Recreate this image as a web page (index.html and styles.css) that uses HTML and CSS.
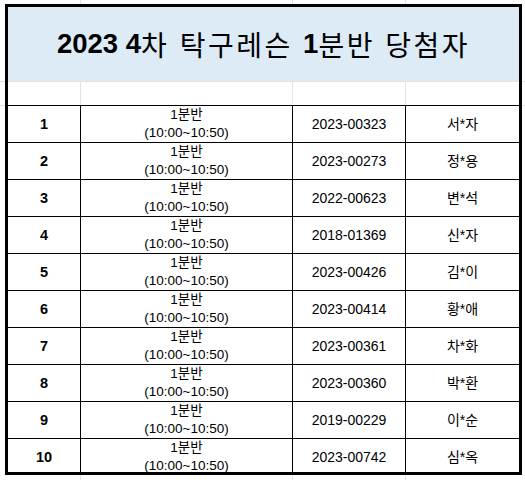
FILE: index.html
```html
<!DOCTYPE html>
<html lang="ko">
<head>
<meta charset="utf-8">
<title>2023 4차 탁구레슨 1분반 당첨자</title>
<link rel="stylesheet" href="styles.css">
</head>
<body>
<div class="sheet">
  <div class="table">
    <div class="title"><span class="lat">2023 4</span><span class="ko">차 탁구레슨 </span><span class="lat">1</span><span class="ko">분반 당첨자</span></div>
    <div class="blank">
      <div class="bc"></div><div class="bc"></div><div class="bc"></div><div class="bc"></div>
    </div>
    <div class="row"><div class="c num">1</div><div class="c cls">1분반<br>(10:00~10:50)</div><div class="c id">2023-00323</div><div class="c name">서*자</div></div>
    <div class="row"><div class="c num">2</div><div class="c cls">1분반<br>(10:00~10:50)</div><div class="c id">2023-00273</div><div class="c name">정*용</div></div>
    <div class="row"><div class="c num">3</div><div class="c cls">1분반<br>(10:00~10:50)</div><div class="c id">2022-00623</div><div class="c name">변*석</div></div>
    <div class="row"><div class="c num">4</div><div class="c cls">1분반<br>(10:00~10:50)</div><div class="c id">2018-01369</div><div class="c name">신*자</div></div>
    <div class="row"><div class="c num">5</div><div class="c cls">1분반<br>(10:00~10:50)</div><div class="c id">2023-00426</div><div class="c name">김*이</div></div>
    <div class="row"><div class="c num">6</div><div class="c cls">1분반<br>(10:00~10:50)</div><div class="c id">2023-00414</div><div class="c name">황*애</div></div>
    <div class="row"><div class="c num">7</div><div class="c cls">1분반<br>(10:00~10:50)</div><div class="c id">2023-00361</div><div class="c name">차*화</div></div>
    <div class="row"><div class="c num">8</div><div class="c cls">1분반<br>(10:00~10:50)</div><div class="c id">2023-00360</div><div class="c name">박*환</div></div>
    <div class="row"><div class="c num">9</div><div class="c cls">1분반<br>(10:00~10:50)</div><div class="c id">2019-00229</div><div class="c name">이*순</div></div>
    <div class="row last"><div class="c num">10</div><div class="c cls">1분반<br>(10:00~10:50)</div><div class="c id">2023-00742</div><div class="c name">심*옥</div></div>
  </div>
</div>
</body>
</html>
```

FILE: styles.css
```css
* { box-sizing: border-box; }
html, body { margin: 0; padding: 0; }
body {
  width: 525px;
  height: 480px;
  overflow: hidden;
  background-color: #fff;
  background-image:
    linear-gradient(to right, transparent 80px, #e2e2e2 80px, #e2e2e2 81px, transparent 81px),
    linear-gradient(to right, transparent 292px, #e2e2e2 292px, #e2e2e2 293px, transparent 293px),
    linear-gradient(to right, transparent 405px, #e2e2e2 405px, #e2e2e2 406px, transparent 406px),
    linear-gradient(to bottom, transparent 81px, #e2e2e2 81px, #e2e2e2 82px, transparent 82px),
    linear-gradient(to bottom, transparent 105px, #e2e2e2 105px, #e2e2e2 106px, transparent 106px);
  font-family: "Liberation Sans", "Noto Sans CJK KR", sans-serif;
  color: #000;
}
.sheet {
  padding: 4px 0 0 5px;
}
.table {
  width: 517px;
  border: 3px solid #000;
  background: #fff;
}
.title {
  height: 74px;
  background: #ddebf7;
  display: flex;
  align-items: center;
  justify-content: center;
  white-space: pre;
}
.title .lat {
  font-family: "Liberation Sans", Arial, sans-serif;
  font-weight: 700;
  font-size: 27.5px;
}
.title .ko {
  font-family: "Noto Sans CJK KR", sans-serif;
  font-weight: 400;
  font-size: 28px;
  letter-spacing: 2.5px;
}
.blank {
  height: 24px;
  border-top: 1px solid #e2e2e2;
  display: grid;
  grid-template-columns: 72px 212px 113px 114px;
}
.blank .bc + .bc { border-left: 1px solid #e2e2e2; }
.row {
  height: 37px;
  border-top: 1px solid #000;
  display: grid;
  grid-template-columns: 72px 212px 113px 114px;
}
.row.last { height: 34px; }
.c {
  display: flex;
  align-items: center;
  justify-content: center;
  text-align: center;
  font-family: "Liberation Sans", "Noto Sans CJK KR", sans-serif;
  font-size: 13.5px;
  line-height: 18px;
}
.c + .c { border-left: 1px solid #000; }
.num {
  font-weight: 700;
  font-size: 14.5px;
}
.id { font-size: 14px; }
.name { font-size: 14px; }
```
